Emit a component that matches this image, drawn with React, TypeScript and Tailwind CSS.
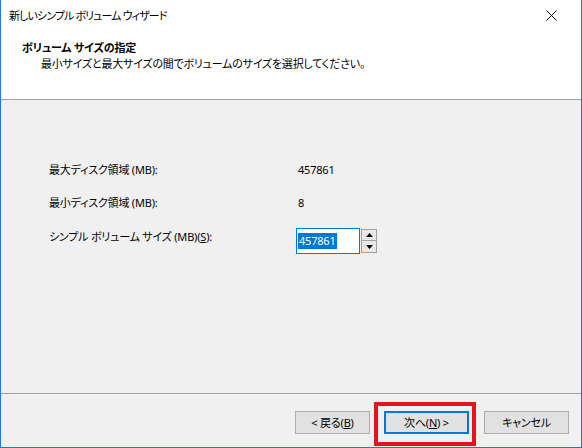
import React from "react";

function Btn({ children, primary }: { children: React.ReactNode; primary?: boolean }) {
  return (
    <div
      className={
        "h-[23px] flex items-center justify-center bg-[#e1e1e1] text-[11px] leading-[16px] text-black " +
        (primary ? "w-[85px] border-2 border-[#0078d7]" : "border border-[#adadad]")
      }
    >
      {children}
    </div>
  );
}

export default function App() {
  return (
    <div className="w-[582px] h-[448px] flex flex-col border-x border-b border-[#2b79c6] font-['Noto_Sans','Noto_Sans_CJK_JP',sans-serif] [font-feature-settings:'palt'] tracking-[-0.2px] text-black overflow-hidden">
      {/* title bar */}
      <div className="h-[31px] bg-white flex items-center justify-between pl-[8px] pr-[24px]">
        <span className="text-[11px] leading-[16px] tracking-[-0.9px]">新しいシンプル ボリューム ウィザード</span>
        <svg width="11" height="11" viewBox="0 0 11 11">
          <path d="M0.5 0.5 L10.5 10.5 M10.5 0.5 L0.5 10.5" stroke="#000" strokeWidth="1" />
        </svg>
      </div>
      {/* header */}
      <div className="h-[69px] bg-white border-b border-[#a0a0a0] pt-[9px] pl-[21px]">
        <div className="text-[11px] leading-[16px] font-bold">ボリューム サイズの指定</div>
        <div className="text-[11px] leading-[16px] pl-[19px]">最小サイズと最大サイズの間でボリュームのサイズを選択してください。</div>
      </div>
      {/* body */}
      <div className="flex-1 bg-[#f0f0f0] pt-[62px] pl-[48px] flex flex-col">
        <div className="flex h-[16px] text-[11px] leading-[16px]">
          <div className="w-[248px]">最大ディスク領域 (MB):</div>
          <div className="pl-[1px]">457861</div>
        </div>
        <div className="flex h-[16px] mt-[17px] text-[11px] leading-[16px]">
          <div className="w-[248px]">最小ディスク領域 (MB):</div>
          <div className="pl-[1px]">8</div>
        </div>
        <div className="flex mt-[17px] text-[11px] leading-[16px]">
          <div className="w-[247px] mt-[1px]">
            シンプル ボリューム サイズ (MB)(<span className="underline">S</span>):
          </div>
          <div className="flex">
            <div className="w-[64px] h-[26px] bg-white border border-[#0078d7] flex items-center pl-[1px]">
              <span className="bg-[#0078d7] text-white px-[1px] leading-[16px]">457861</span>
            </div>
            <div className="ml-[1px] mt-[1px] flex flex-col w-[16px]">
              <div className="h-[12px] bg-[#e8e8e8] border border-[#a0a0a0] flex items-center justify-center">
                <svg width="7" height="4" viewBox="0 0 7 4">
                  <path d="M0 4 L3.5 0 L7 4 Z" fill="#000" />
                </svg>
              </div>
              <div className="h-[12px] bg-[#e8e8e8] border border-t-0 border-[#a0a0a0] flex items-center justify-center">
                <svg width="7" height="4" viewBox="0 0 7 4">
                  <path d="M0 0 L3.5 4 L7 0 Z" fill="#000" />
                </svg>
              </div>
            </div>
          </div>
        </div>
      </div>
      {/* footer */}
      <div className="h-[54px] bg-[#f0f0f0] border-t border-[#a0a0a0] flex justify-end pt-[17px] pr-[12px]">
        <div className="w-[75px]">
          <Btn>
            &lt; 戻る(<span className="underline">B</span>)
          </Btn>
        </div>
        <div className="relative ml-[14px]">
          <Btn primary>
            次へ(<span className="underline">N</span>) &gt;
          </Btn>
          <div className="absolute left-[-10px] top-[-9px] w-[102px] h-[44px] border-4 border-[#e3141d]" />
        </div>
        <div className="ml-[15px] w-[85px]">
          <Btn>キャンセル</Btn>
        </div>
      </div>
    </div>
  );
}
